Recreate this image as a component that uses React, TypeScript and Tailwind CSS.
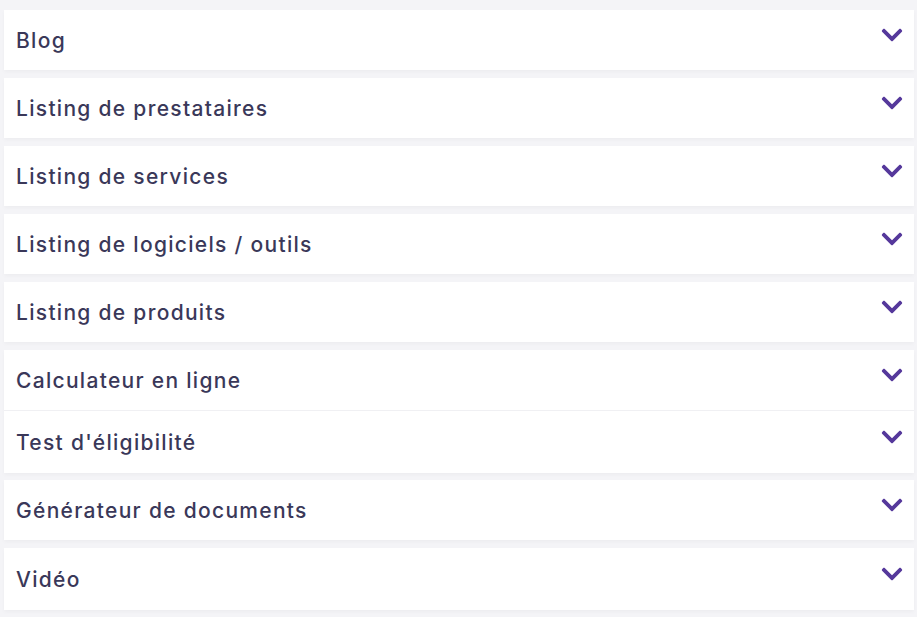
import React from "react";
import { FaChevronDown } from "react-icons/fa";

const items = [
  { label: "Blog", cls: "h-[60px] mb-[8px]" },
  { label: "Listing de prestataires", cls: "h-[60px] mb-[8px]" },
  { label: "Listing de services", cls: "h-[60px] mb-[8px]" },
  { label: "Listing de logiciels / outils", cls: "h-[60px] mb-[8px]" },
  { label: "Listing de produits", cls: "h-[60px] mb-[8px]" },
  { label: "Calculateur en ligne", cls: "h-[61px] border-b border-[#f0f0f3]" },
  { label: "Test d'éligibilité", cls: "h-[62px] mb-[7px]" },
  { label: "Générateur de documents", cls: "h-[60px] mb-[8px]" },
  { label: "Vidéo", cls: "h-[62px]" },
];

const App = () => {
  return (
    <div className="min-h-[617px] w-[917px] bg-[#f4f4f7] pt-[10px] pl-[4px] pr-[3px] font-['Inter',sans-serif]">
      {items.map((item, i) => (
        <div
          key={i}
          className={`flex items-center justify-between bg-white pl-[12px] pr-[10px] shadow-[0_2px_4px_rgba(0,0,0,0.03)] ${item.cls}`}
        >
          <span className="text-[21px] font-medium leading-none tracking-[1.3px] text-[#3a3859]">
            {item.label}
          </span>
          <FaChevronDown className="-mt-[10px] text-[#55389b]" size={24} />
        </div>
      ))}
    </div>
  );
};

export default App;
